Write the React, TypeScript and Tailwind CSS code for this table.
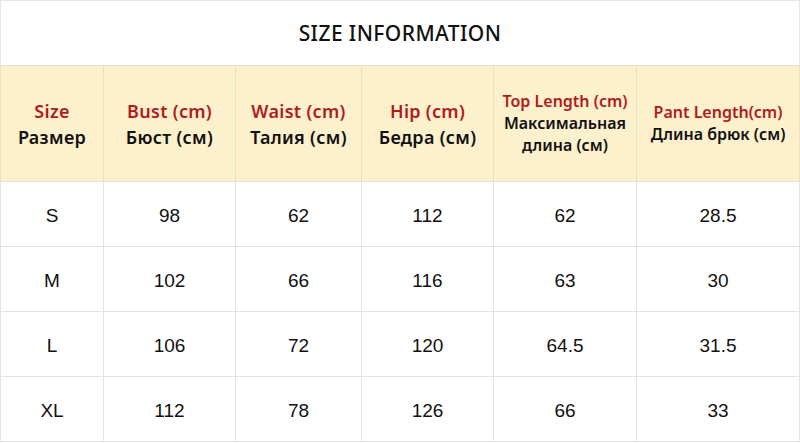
const headers = [
  { en: 'Size', ru: ['Размер'], small: false },
  { en: 'Bust (cm)', ru: ['Бюст (см)'], small: false },
  { en: 'Waist (cm)', ru: ['Талия (см)'], small: false },
  { en: 'Hip (cm)', ru: ['Бедра (см)'], small: false },
  { en: 'Top Length (cm)', ru: ['Максимальная', 'длина (см)'], small: true },
  { en: 'Pant Length(cm)', ru: ['Длина брюк (см)'], small: true },
]

const rows = [
  ['S', '98', '62', '112', '62', '28.5'],
  ['M', '102', '66', '116', '63', '30'],
  ['L', '106', '72', '120', '64.5', '31.5'],
  ['XL', '112', '78', '126', '66', '33'],
]

const COLS = 'grid grid-cols-[103px_132px_126px_132px_143px_164px]'

export default function App() {
  return (
    <div className="h-[443px] w-[800px] overflow-hidden bg-white font-['Liberation_Sans',sans-serif] text-black">
      {/* Title */}
      <div className="flex h-[65px] items-center justify-center border-x border-t border-[#e6e6e6] pt-[2px]">
        <h1 className="font-['Noto_Sans',sans-serif] text-[21px] font-medium tracking-[0.4px] text-[#111]">
          SIZE INFORMATION
        </h1>
      </div>

      {/* Header row */}
      <div className={`${COLS} h-[116px] bg-[#fdf0cd]`}>
        {headers.map((h, i) => (
          <div
            key={h.en}
            className={`flex flex-col items-center justify-center border-t border-l border-[#ecdfbd] text-center font-['Noto_Sans',sans-serif] font-semibold ${
              i === headers.length - 1 ? 'border-r' : ''
            } ${h.small ? 'pb-[2px] text-[16px] leading-[22px]' : 'pt-[1px] text-[18px] leading-[26px] tracking-[0.3px]'}`}
          >
            <span className="text-[#b01c1c]">{h.en}</span>
            {h.ru.map((line) => (
              <span key={line} className="text-[#111]">
                {line}
              </span>
            ))}
          </div>
        ))}
      </div>

      {/* Data rows */}
      {rows.map((row, r) => (
        <div
          key={row[0]}
          className={`${COLS} ${r === rows.length - 1 ? 'h-[66px] border-b' : 'h-[65px]'} border-[#e3e3e3]`}
        >
          {row.map((val, i) => (
            <div
              key={i}
              className={`flex items-center justify-center border-t border-l border-[#e3e3e3] pt-[4px] text-[19px] text-[#111] ${
                i === row.length - 1 ? 'border-r' : ''
              }`}
            >
              {val}
            </div>
          ))}
        </div>
      ))}
    </div>
  )
}
